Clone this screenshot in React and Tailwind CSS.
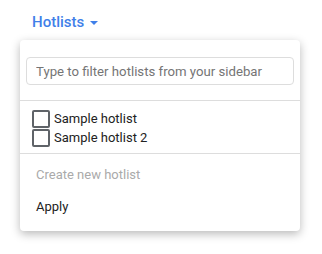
import { useState } from "react";

const hotlists = ["Sample hotlist", "Sample hotlist 2"];

const App = () => {
  const [filter, setFilter] = useState("");
  const [checked, setChecked] = useState({});

  return (
    <div
      className="min-h-[254px] w-[322px] bg-white px-5 pt-[12px]"
      style={{ fontFamily: "Roboto, 'Noto Sans', sans-serif" }}
    >
      <button className="flex h-5 items-center pl-3 text-[15px] font-medium leading-5 text-[#3f7fe9]">
        Hotlists
        <svg className="ml-[6px] mt-[2px]" width="8" height="4" viewBox="0 0 8 4">
          <path d="M0 0h8L4 4z" fill="#3f7fe9" />
        </svg>
      </button>

      <div className="mt-[8px] w-[280px] rounded bg-white shadow-[0_3px_10px_rgba(0,0,0,0.28)]">
        <div className="border-b border-[#ddd] px-[6px] pt-[17px] pb-[15px]">
          <input
            type="text"
            value={filter}
            onChange={(e) => setFilter(e.target.value)}
            placeholder="Type to filter hotlists from your sidebar"
            className="h-[28px] w-full rounded border border-[#ddd] px-[9px] text-[13.2px] text-[#222] placeholder:text-[#757575] focus:outline-none"
          />
        </div>

        <div className="border-b border-[#ddd] pt-[8px] pb-[6px] pl-3">
          {hotlists.map((name) => (
            <label
              key={name}
              className="flex h-[19px] cursor-pointer items-center gap-1 text-[13px] text-[#222]"
            >
              <input
                type="checkbox"
                checked={!!checked[name]}
                onChange={() =>
                  setChecked((c) => ({ ...c, [name]: !c[name] }))
                }
                className="h-[18px] w-[18px] appearance-none rounded-[2px] border-2 border-[#5f6368] checked:bg-[#5f6368]"
              />
              {name}
            </label>
          ))}
        </div>

        <div className="pt-[5px] pb-[8px] text-[13px]">
          <div className="flex h-8 items-center px-4 text-[#aaa]">
            Create new hotlist
          </div>
          <div className="flex h-8 cursor-pointer items-center px-4 text-[#222]">
            Apply
          </div>
        </div>
      </div>
    </div>
  );
};

export default App;
